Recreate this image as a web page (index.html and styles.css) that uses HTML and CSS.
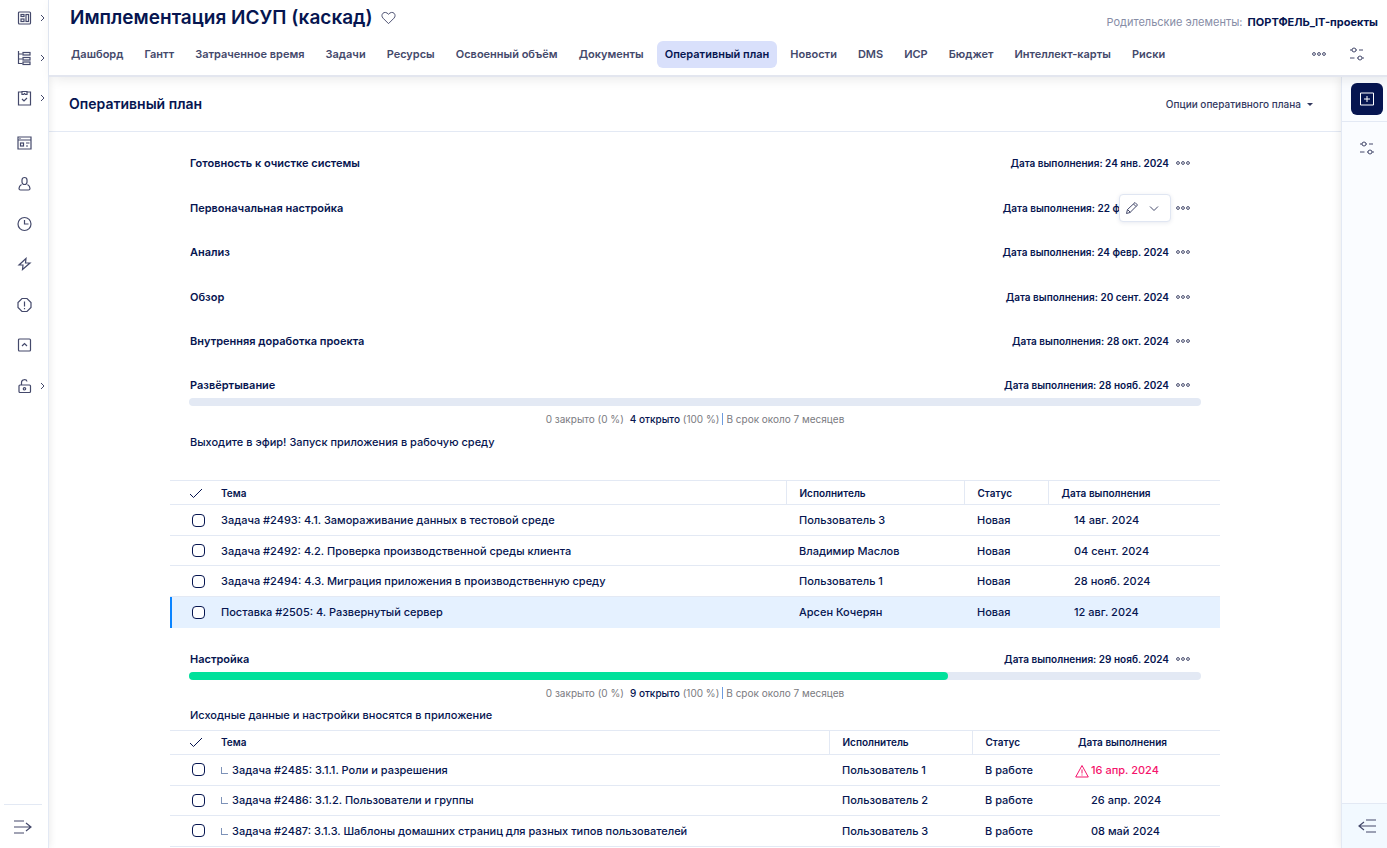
FILE: index.html
```html
<!DOCTYPE html>
<html lang="ru">
<head>
<meta charset="utf-8">
<title>Оперативный план</title>
<link rel="stylesheet" href="styles.css">
</head>
<body>
<svg class="sprite" aria-hidden="true">
  <symbol id="dots" viewBox="0 0 16 6"><circle cx="3" cy="3" r="1.400"/><circle cx="8" cy="3" r="1.400"/><circle cx="13" cy="3" r="1.400"/></symbol>
  <symbol id="sliders" viewBox="0 0 16 16"><path d="M1 4h2M7 4h1M10 4h4M1 12h4.5M8 12h1M13 12h2"/><circle cx="5" cy="4" r="2"/><circle cx="11" cy="12" r="2"/></symbol>
  <symbol id="chev" viewBox="0 0 6 8"><path d="M1 1l3 3L1 7"/></symbol>
  <symbol id="tick" viewBox="0 0 14 12"><path d="M1 7l3.500 3.500L13 2"/></symbol>
</svg>
<div class="app">
  <nav class="sidebar" aria-label="Основное меню">
    <div class="group top">
      <button class="item" aria-label="Дашборды"><svg class="icon" viewBox="0 0 16 16"><rect x="2" y="2" width="12" height="12" rx="1"/><rect x="4.500" y="4.500" width="3" height="2"/><rect x="4.500" y="9" width="3" height="2.500"/><rect x="9.500" y="4.500" width="2.500" height="7"/></svg><svg class="chev"><use href="#chev"/></svg></button>
      <button class="item" aria-label="Проекты"><svg class="icon" viewBox="0 0 16 16"><path d="M2 1v12.500h4M2 4h4M2 9h4"/><rect x="6.500" y="2.500" width="7" height="2.500"/><rect x="6.500" y="7.500" width="7" height="2.500"/><rect x="6.500" y="12" width="7" height="2.500"/></svg><svg class="chev"><use href="#chev"/></svg></button>
      <button class="item" aria-label="Задачи"><svg class="icon" viewBox="0 0 16 16"><path d="M5 2H2v13h12V2h-3M5.500 1.500h5v3h-1.500L8 3.500l-1 1H5.500zM5.500 9l2 2 3-3"/></svg><svg class="chev"><use href="#chev"/></svg></button>
    </div>
    <div class="group rest">
      <button class="item" aria-label="Новости"><svg class="icon" viewBox="0 0 16 16"><path d="M1.500 2h13v12h-13zM1.500 5h13M3 3.500h1M9.500 8h3.500M9.500 11h2"/><rect x="4" y="8" width="3" height="3"/></svg></button>
      <button class="item" aria-label="Пользователи"><svg class="icon" viewBox="0 0 16 16"><rect x="5.500" y="1.500" width="5" height="7" rx="2.500"/><path d="M5 8.500c-1.500.8-2.500 2-2.500 4 0 1 .5 1.500 1.500 1.500h8c1 0 1.500-.5 1.500-1.500 0-2-1-3.200-2.500-4"/></svg></button>
      <button class="item" aria-label="Время"><svg class="icon" viewBox="0 0 16 16"><circle cx="8" cy="8" r="6.500"/><path d="M8 4v4h4"/></svg></button>
      <button class="item" aria-label="События"><svg class="icon" viewBox="0 0 16 16"><path d="M9.500 2.500L2.500 9H6.500L6 13.500 13.500 7H9z"/></svg></button>
      <button class="item" aria-label="Проблемы"><svg class="icon" viewBox="0 0 16 16"><path d="M5.500 1.500h5l4 4v5l-4 4h-5l-4-4v-5zM8 4.500v5M8 11v1.200"/></svg></button>
      <button class="item" aria-label="Наверх"><svg class="icon" viewBox="0 0 16 16"><rect x="2" y="2" width="12" height="12" rx="1"/><path d="M5.500 9L8 6.500 10.500 9"/></svg></button>
      <button class="item" aria-label="Доступ"><svg class="icon" viewBox="0 0 16 16"><rect x="2.500" y="7" width="11.500" height="7.500" rx="1"/><path d="M5 7V4.500c0-3.500 5-3.500 5.500-1"/><circle cx="8" cy="10.800" r="1.200"/></svg><svg class="chev"><use href="#chev"/></svg></button>
    </div>
    <button class="expand" aria-label="Развернуть меню"><svg viewBox="0 0 20 14"><path d="M1 1h10M1 7h17M1 13h10M13 3l5 4-5 4"/></svg></button>
  </nav>

  <div class="page">
    <header class="header">
      <div class="title-row">
        <h1>Имплементация ИСУП (каскад)</h1>
        <button class="heart" aria-label="В избранное"><svg viewBox="0 0 16 14"><path d="M8 13L2.200 7.200C.5 5.500.8 3.200 2 2c1.500-1.500 4-1.300 6 1 2-2.300 4.500-2.500 6-1 1.200 1.200 1.500 3.500-.2 5.200z"/></svg></button>
        <p class="parents">Родительские элементы: <a href="#">ПОРТФЕЛЬ_IT-проекты</a></p>
      </div>
      <nav class="tabs" aria-label="Проект">
        <a href="#">Дашборд</a><a href="#">Гантт</a><a href="#">Затраченное время</a><a href="#">Задачи</a><a href="#">Ресурсы</a><a href="#">Освоенный объём</a><a href="#">Документы</a><a href="#" class="active" aria-current="page">Оперативный план</a><a href="#">Новости</a><a href="#">DMS</a><a href="#">ИСР</a><a href="#">Бюджет</a><a href="#">Интеллект-карты</a><a href="#">Риски</a>
        <button class="tab-more" aria-label="Ещё"><svg class="dots"><use href="#dots"/></svg></button>
        <button class="tab-set" aria-label="Настройки"><svg class="sliders"><use href="#sliders"/></svg></button>
      </nav>
    </header>
    <div class="body">
      <main class="main">
        <div class="bar">
          <h2>Оперативный план</h2>
          <button class="options">Опции оперативного плана<span class="caret"></span></button>
        </div>
        <div class="plan">
          <section class="version"><div class="head"><h3>Готовность к очистке системы</h3><span class="due">Дата выполнения: 24 янв. 2024</span><button class="more" aria-label="Действия"><svg class="dots"><use href="#dots"/></svg></button></div></section>
          <section class="version"><div class="head"><h3>Первоначальная настройка</h3><span class="due">Дата выполнения: 22 февр. 2024</span><button class="more" aria-label="Действия"><svg class="dots"><use href="#dots"/></svg></button>
            <div class="popup"><button aria-label="Редактировать"><svg viewBox="0 0 14 14"><path d="M1.500 12.500l1-4 7.500-7 2.500 2.500-7.500 7.500zM2.500 8.500l3 3M8.500 3L11 5.500"/></svg></button><button aria-label="Открыть список"><svg viewBox="0 0 14 14"><path d="M3 5.500l4 4 4-4"/></svg></button></div></div></section>
          <section class="version"><div class="head"><h3>Анализ</h3><span class="due">Дата выполнения: 24 февр. 2024</span><button class="more" aria-label="Действия"><svg class="dots"><use href="#dots"/></svg></button></div></section>
          <section class="version"><div class="head"><h3>Обзор</h3><span class="due">Дата выполнения: 20 сент. 2024</span><button class="more" aria-label="Действия"><svg class="dots"><use href="#dots"/></svg></button></div></section>
          <section class="version"><div class="head"><h3>Внутренняя доработка проекта</h3><span class="due">Дата выполнения: 28 окт. 2024</span><button class="more" aria-label="Действия"><svg class="dots"><use href="#dots"/></svg></button></div></section>

          <section class="version full spaced">
            <div class="head"><h3>Развёртывание</h3><span class="due">Дата выполнения: 28 нояб. 2024</span><button class="more" aria-label="Действия"><svg class="dots"><use href="#dots"/></svg></button></div>
            <div class="progress"></div>
            <p class="stats"><span>0 закрыто (0 %)</span> <span><a href="#">4 открыто</a> (100 %)</span><i></i><span>В срок около 7 месяцев</span></p>
            <p class="descr">Выходите в эфир! Запуск приложения в рабочую среду</p>
            <table>
              <colgroup><col class="c-check"><col><col class="c-user"><col class="c-status"><col class="c-date"></colgroup>
              <thead><tr><th class="check"><svg class="tick" role="img" aria-label="Выбрать"><use href="#tick"/></svg></th><th>Тема</th><th class="split">Исполнитель</th><th class="split">Статус</th><th class="split">Дата выполнения</th></tr></thead>
              <tbody>
                <tr><td class="check"><input type="checkbox" aria-label="Задача 2493"></td><td>Задача #2493: 4.1. Замораживание данных в тестовой среде</td><td>Пользователь 3</td><td>Новая</td><td class="date">14 авг. 2024</td></tr>
                <tr><td class="check"><input type="checkbox" aria-label="Задача 2492"></td><td>Задача #2492: 4.2. Проверка производственной среды клиента</td><td>Владимир Маслов</td><td>Новая</td><td class="date">04 сент. 2024</td></tr>
                <tr><td class="check"><input type="checkbox" aria-label="Задача 2494"></td><td>Задача #2494: 4.3. Миграция приложения в производственную среду</td><td>Пользователь 1</td><td>Новая</td><td class="date">28 нояб. 2024</td></tr>
                <tr class="current"><td class="check"><input type="checkbox" aria-label="Поставка 2505"></td><td>Поставка #2505: 4. Развернутый сервер</td><td>Арсен Кочерян</td><td>Новая</td><td class="date">12 авг. 2024</td></tr>
              </tbody>
            </table>
          </section>

          <section class="version full">
            <div class="head"><h3>Настройка</h3><span class="due">Дата выполнения: 29 нояб. 2024</span><button class="more" aria-label="Действия"><svg class="dots"><use href="#dots"/></svg></button></div>
            <div class="progress"><div class="done" style="width:75%"></div></div>
            <p class="stats"><span>0 закрыто (0 %)</span> <span><a href="#">9 открыто</a> (100 %)</span><i></i><span>В срок около 7 месяцев</span></p>
            <p class="descr">Исходные данные и настройки вносятся в приложение</p>
            <table class="nested">
              <colgroup><col class="c-check"><col><col class="c-user"><col class="c-status"><col class="c-date"></colgroup>
              <thead><tr><th class="check"><svg class="tick" role="img" aria-label="Выбрать"><use href="#tick"/></svg></th><th>Тема</th><th class="split">Исполнитель</th><th class="split">Статус</th><th>Дата выполнения</th></tr></thead>
              <tbody>
                <tr><td class="check"><input type="checkbox" aria-label="Задача 2485"></td><td class="sub">Задача #2485: 3.1.1. Роли и разрешения</td><td>Пользователь 1</td><td>В работе</td><td class="date late"><svg viewBox="0 0 14 14"><path d="M7 1.500L13.300 13H.7zM7 5.500v4M7 10.500v1"/></svg>16 апр. 2024</td></tr>
                <tr><td class="check"><input type="checkbox" aria-label="Задача 2486"></td><td class="sub">Задача #2486: 3.1.2. Пользователи и группы</td><td>Пользователь 2</td><td>В работе</td><td class="date">26 апр. 2024</td></tr>
                <tr><td class="check"><input type="checkbox" aria-label="Задача 2487"></td><td class="sub">Задача #2487: 3.1.3. Шаблоны домашних страниц для разных типов пользователей</td><td>Пользователь 3</td><td>В работе</td><td class="date">08 май 2024</td></tr>
              </tbody>
            </table>
          </section>
        </div>
      </main>
      <aside class="rail">
        <div class="rail-top"><button class="add" aria-label="Добавить"><svg viewBox="0 0 16 16"><path d="M1.500 2h13v12h-13zM8 5v6M5 8h6"/></svg></button></div>
        <button class="rail-set" aria-label="Настройки"><svg class="sliders"><use href="#sliders"/></svg></button>
        <button class="collapse" aria-label="Свернуть панель"><svg viewBox="0 0 20 14"><path d="M9 1h10M2 7h17M9 13h10M7 3L2 7l5 4"/></svg></button>
      </aside>
    </div>
  </div>
</div>
</body>
</html>
```
FILE: styles.css
```css
* { box-sizing: border-box; }
body {
  margin: 0;
  font: 11px/16px Inter, "Open Sans", sans-serif;
  color: #061550;
  background: #fff;
  overflow: hidden;
}
h1, h2, h3, p { margin: 0; }
a { color: inherit; text-decoration: none; }
button {
  font: inherit;
  color: inherit;
  padding: 0;
  border: 0;
  background: none;
  cursor: pointer;
}
svg { display: block; fill: none; stroke: #44496b; stroke-width: 1; }
.sprite { display: none; }
.dots { width: 16px; height: 6px; }
.sliders { width: 16px; height: 16px; }
.app { display: flex; height: 100vh; }

.sidebar {
  flex: none;
  width: 49px;
  display: flex;
  flex-direction: column;
  border-right: 1px solid #e3e9f4;
  background: #fff;
  box-shadow: 0 0 8px #0000001a;
  position: relative;
}
.group { display: flex; flex-direction: column; }
.top { height: 120px; margin-bottom: 3px; }
.rest { height: 283px; }
.item {
  flex: 1;
  display: flex;
  align-items: center;
  padding-left: 16px;
  gap: 7px;
}
.top .item { padding-bottom: 4px; }
.icon { width: 17px; height: 16px; stroke-width: 1.200; }
.chev { width: 6px; height: 8px; }
.expand {
  margin: auto 6px 0 4px;
  height: 44px;
  padding-left: 9px;
  border-top: 1px solid #e3e9f4;
}
.expand svg, .collapse svg { width: 20px; height: 14px; stroke-width: 1.200; }

.page { flex: 1; min-width: 0; display: flex; flex-direction: column; }
.header {
  flex: none;
  height: 77px;
  border-bottom: 2px solid #e3e6ef;
  box-shadow: 4px 2px 12px #00000018;
  background: #fff;
  position: relative;
  z-index: 1;
}
.title-row { display: flex; align-items: center; height: 36px; padding: 0 9px 0 21px; }
h1 { font-size: 19px; line-height: 24px; font-weight: 600; }
.heart { margin-left: 8px; }
.heart svg { width: 15px; height: 14px; }
.parents { margin: 8px 0 0 auto; color: #878da6; }
.parents a { color: #061550; font-weight: 700; margin-left: 2px; }
.tabs { display: flex; align-items: center; height: 36px; padding: 0 22px 0 14px; gap: 5px; }
.tabs a {
  padding: 0 8px;
  line-height: 27px;
  border-radius: 6px;
  font-weight: 600;
  color: #44496b;
  white-space: nowrap;
}
.tabs .active { background: #d9e0fb; color: #061550; }
.tab-more { margin-left: auto; }
.tab-set { margin-left: 17px; }

.body { flex: 1; min-height: 0; display: flex; }
.main { flex: 1; min-width: 0; overflow: hidden; }
.bar {
  display: flex;
  align-items: center;
  justify-content: space-between;
  height: 55px;
  padding: 0 28px 0 20px;
  border-bottom: 1px solid #e3e9f4;
}
h2 { font-size: 14px; font-weight: 600; }
.options { display: flex; align-items: center; gap: 6px; font-size: 10px; font-weight: 500; color: #33395f; }
.caret { border: 3px solid transparent; border-top-color: currentColor; border-bottom: 0; }
.plan { max-width: 1050px; margin: 0 auto; padding-top: 23px; }
.version { height: 44px; }
.version:nth-child(-n+3):nth-child(odd) { height: 45px; }
.full:nth-child(n) { height: auto; }
.head { position: relative; display: flex; align-items: center; padding: 0 29px 0 20px; }
h3 { flex: 1; font-size: 11px; font-weight: 600; }
.due { font-size: 10px; font-weight: 600; }
.more { margin-left: 6px; }
.popup {
  position: absolute;
  right: 49px;
  top: -6px;
  display: flex;
  align-items: center;
  gap: 8px;
  padding: 0 9px 0 5px;
  height: 28px;
  border: 1px solid #e0e6f2;
  border-radius: 4px;
  background: #fff;
  box-shadow: 0 1px 4px #1c2f6a1a;
}
.popup svg { width: 14px; height: 14px; }

.progress { height: 8px; margin: 5px 19px 0; border-radius: 4px; background: #e3e9f4; }
.done { height: 8px; border-radius: 4px; background: #00e19b; }
.stats {
  display: flex;
  justify-content: center;
  align-items: center;
  margin-top: 5px;
  font-size: 10px;
  color: #7a7a80;
}
.stats a { color: #061550; font-weight: 500; margin-left: 6px; }
.stats i { width: 1px; height: 12px; margin: 0 3px; background: #6c9be0; }
.descr { margin: 6px 20px 7px; font-weight: 450; }
.spaced .descr { margin: 7px 20px 30px; }
.spaced { margin-bottom: 23px; }

table { width: 100%; table-layout: fixed; border-collapse: collapse; }
th, td { padding: 0 0 0 13px; text-align: left; white-space: nowrap; }
thead tr { height: 24px; border-top: 1px solid #e3e9f4; border-bottom: 1px solid #e3e9f4; }
th { font-size: 10px; font-weight: 600; }
td { font-weight: 450; }
.split { border-left: 1px solid #e3e9f4; }
tbody tr { height: 31px; border-bottom: 1px solid #e3e9f4; }
tbody tr:nth-child(2) { height: 30px; }
th.check, td.check { padding: 0 0 0 19px; }
.tick { width: 14px; height: 12px; stroke: #061550; }
input {
  display: block;
  appearance: none;
  width: 13px;
  height: 13px;
  margin: 0 0 0 3px;
  border: 1px solid #061550;
  border-radius: 4px;
  background: #fff;
}
.c-check { width: 38px; }
.c-user { width: 178px; }
.c-status { width: 84px; }
.c-date { width: 172px; }
.nested .c-user { width: 143px; }
.nested .c-status { width: 93px; }
.nested .c-date { width: 155px; }
td.date { padding-left: 26px; }
.current { background: #e5f1ff; box-shadow: inset 2px 0 #0a84ff; border-bottom: 0; }
.sub::before {
  content: "";
  display: inline-block;
  width: 6px;
  height: 6px;
  margin-right: 4px;
  border-left: 1px solid #7d92b8;
  border-bottom: 1px solid #7d92b8;
}
.late { color: #f5146c; }
td.late { padding-left: 10px; }
.late svg { display: inline-block; width: 14px; height: 14px; margin-right: 2px; stroke: #f5146c; vertical-align: middle; }

.rail {
  flex: none;
  width: 46px;
  display: flex;
  flex-direction: column;
  align-items: center;
  background: #fafcff;
  border-left: 1px solid #e3e9f4;
  box-shadow: 0 0 10px #0000001a;
  position: relative;
}
.rail-top { align-self: stretch; padding: 6px 0 6px 9px; border-bottom: 1px solid #e3e9f4; }
.add { display: grid; place-items: center; width: 32px; height: 32px; border-radius: 6px; background: #061550; }
.add svg { width: 16px; height: 16px; stroke: #fff; }
.rail-set { margin: 18px 0 0 5px; }
.collapse {
  align-self: stretch;
  margin-top: auto;
  height: 45px;
  padding-left: 15px;
  border-top: 1px solid #e3e9f4;
  background: #f2f9ff;
}
```
